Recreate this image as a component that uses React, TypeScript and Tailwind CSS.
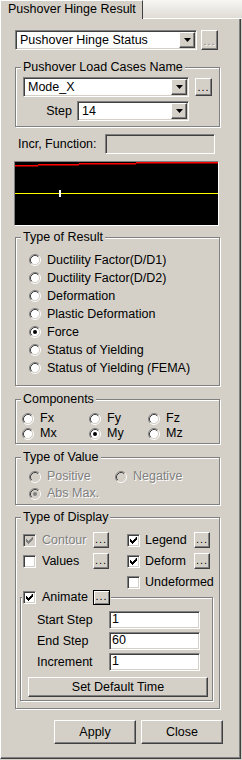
import type { ReactNode } from 'react';

const face = 'bg-[#d4d0c8]';
const raised =
    'border border-t-white border-l-white border-r-[#404040] border-b-[#404040] shadow-[inset_-1px_-1px_0_#808080] bg-[#d4d0c8]';
const sunken =
    'border border-t-[#808080] border-l-[#808080] border-r-white border-b-white shadow-[inset_1px_1px_0_#404040,inset_-1px_-1px_0_#d4d0c8]';
const etched = 'border border-[#808080] shadow-[inset_1px_1px_0_#fff,1px_1px_0_#fff]';
const grayText = 'text-[#808080] [text-shadow:1px_1px_0_#fff]';

function Arrow() {
    return (
        <div className={`${raised} w-[16px] h-[16px] flex items-center justify-center shrink-0`}>
            <svg width="7" height="4" viewBox="0 0 7 4">
                <path d="M0 0H7L3.5 4Z" fill="#000" />
            </svg>
        </div>
    );
}

function Combo({ value, className }: { value: string; className: string }) {
    return (
        <div className={`${sunken} ${className} h-[20px] bg-white flex items-center p-[1px]`}>
            <span className="flex-1 pl-[3px] leading-[16px]">{value}</span>
            <Arrow />
        </div>
    );
}

function Dots({ className, dim, focus }: { className: string; dim?: boolean; focus?: boolean }) {
    return (
        <div
            className={`${focus ? 'border border-black shadow-[inset_1px_1px_0_#fff,inset_-1px_-1px_0_#808080] bg-[#d4d0c8]' : raised} ${className} flex items-end justify-center pb-[2px] shrink-0 leading-none`}
        >
            <span className={`text-[11px] tracking-[1px] ${dim ? grayText : ''}`}>...</span>
        </div>
    );
}

function Radio({ checked, disabled }: { checked?: boolean; disabled?: boolean }) {
    return (
        <svg width="12" height="12" viewBox="0 0 12 12" className="shrink-0">
            <path d="M2.11 9.89A5.5 5.5 0 0 1 9.89 2.11" stroke="#808080" fill="none" />
            <path d="M9.89 2.11A5.5 5.5 0 0 1 2.11 9.89" stroke="#fff" fill="none" />
            <circle cx="6" cy="6" r="4.5" fill={disabled ? '#d4d0c8' : '#fff'} />
            <path d="M2.82 9.18A4.5 4.5 0 0 1 9.18 2.82" stroke="#404040" fill="none" />
            <path d="M9.18 2.82A4.5 4.5 0 0 1 2.82 9.18" stroke="#d4d0c8" fill="none" />
            {checked && <circle cx="6" cy="6" r="2" fill={disabled ? '#808080' : '#000'} />}
        </svg>
    );
}

function Check({ checked, disabled }: { checked?: boolean; disabled?: boolean }) {
    return (
        <div className={`${sunken} w-[13px] h-[13px] shrink-0 flex items-center justify-center ${disabled ? face : 'bg-white'}`}>
            {checked && (
                <svg width="7" height="7" viewBox="0 0 7 7">
                    <path
                        d="M6 0h1v3h-1v1h-1v1h-1v1h-1v1h-1v-1h-1v-1h-1v-3h1v1h1v1h1v-1h1v-1h1z"
                        fill={disabled ? '#808080' : '#000'}
                    />
                </svg>
            )}
        </div>
    );
}

function Group({ title, className, children }: { title: ReactNode; className: string; children: ReactNode }) {
    return (
        <fieldset className={`${etched} ${className}`}>
            <legend className="ml-[5px] px-[2px] leading-[14px] bg-[#d4d0c8]">{title}</legend>
            {children}
        </fieldset>
    );
}

function Field({ label, value }: { label: string; value: string }) {
    return (
        <div className="flex items-center h-[18px]">
            <span className="w-[72px]">{label}</span>
            <div className={`${sunken} w-[91px] h-[18px] bg-white pl-[2px] leading-[15px]`}>{value}</div>
        </div>
    );
}

export default function App() {
    const results = [
        'Ductility Factor(D/D1)',
        'Ductility Factor(D/D2)',
        'Deformation',
        'Plastic Deformation',
        'Force',
        'Status of Yielding',
        'Status of Yielding (FEMA)',
    ];

    return (
        <div
            className="w-[242px] h-[760px] bg-[#d4d0c8] overflow-hidden text-black text-[12.5px]"
            style={{ fontFamily: '"Liberation Sans", Arial, sans-serif' }}
        >
            {/* Tab strip */}
            <div className="flex h-[19px]">
                <div className="w-[143px] h-[19px] border-t border-l border-white border-r border-r-[#404040] pl-[7px] leading-[16px] bg-[#d4d0c8]">
                    Pushover Hinge Result
                </div>
                <div className="flex-1 bg-gradient-to-b from-[#f7f6f3] to-[#dfdcd5] border-b border-white" />
            </div>

            <div className="w-[241px] h-[740px] border-l border-white border-r border-r-[#404040] border-b border-b-[#404040] shadow-[inset_-1px_-1px_0_#808080] pl-[14px]">
                {/* Status combo */}
                <div className="flex items-center gap-[4px] pt-[11px]">
                    <Combo value="Pushover Hinge Status" className="w-[182px]" />
                    <Dots className="w-[17px] h-[20px]" dim />
                </div>

                {/* Load cases */}
                <Group title="Pushover Load Cases Name" className="w-[205px] mt-[10px] pb-[5px]">
                    <div className="flex items-center gap-[6px] pl-[7px] pt-[3px]">
                        <Combo value="Mode_X" className="w-[166px]" />
                        <Dots className="w-[17px] h-[18px]" />
                    </div>
                    <div className="flex items-center gap-[5px] pl-[7px] pt-[4px]">
                        <span className="w-[49px] text-right">Step</span>
                        <Combo value="14" className="w-[112px]" />
                    </div>
                </Group>

                {/* Incr function */}
                <div className="flex items-center mt-[7px] pl-[3px]">
                    <span className="w-[87px]">Incr, Function:</span>
                    <div className={`${sunken} w-[110px] h-[20px]`} />
                </div>

                {/* Chart */}
                <div className="mt-[7px] -ml-[1px] w-[205px] h-[65px] border border-t-[#808080] border-l-[#808080] border-r-white border-b-white bg-black">
                    <svg width="203" height="63" viewBox="0 0 203 63" className="block">
                        <rect x="0" y="3" width="23" height="1.5" fill="#ff0000" />
                        <rect x="23" y="2" width="41" height="1.5" fill="#ff0000" />
                        <rect x="64" y="1" width="57" height="1.5" fill="#ff0000" />
                        <rect x="121" y="0" width="82" height="1.5" fill="#ff0000" />
                        <rect x="0" y="31" width="203" height="1" fill="#ffff00" />
                        <rect x="44" y="28" width="2" height="7" fill="#ffffff" />
                    </svg>
                </div>

                {/* Type of result */}
                <Group title="Type of Result" className="w-[205px] mt-[4px] pt-[7px] pb-[8px]">
                    {results.map((r) => (
                        <div key={r} className="flex items-center gap-[6px] h-[18px] pl-[13px]">
                            <Radio checked={r === 'Force'} />
                            <span>{r}</span>
                        </div>
                    ))}
                </Group>

                {/* Components */}
                <Group title="Components" className="w-[205px] mt-[6px] pt-[5px] pb-[2px]">
                    <div className="grid grid-cols-[67px_59px_1fr] pl-[6px]">
                        {['Fx', 'Fy', 'Fz', 'Mx', 'My', 'Mz'].map((c) => (
                            <div key={c} className="flex items-center gap-[6px] h-[15px]">
                                <Radio checked={c === 'My'} />
                                <span>{c}</span>
                            </div>
                        ))}
                    </div>
                </Group>

                {/* Type of value */}
                <Group title="Type of Value" className="w-[205px] mt-[6px] pt-[4px] pb-[2px]">
                    <div className={`grid grid-cols-[86px_1fr] pl-[13px] ${grayText}`}>
                        <div className="flex items-center gap-[6px] h-[17px]">
                            <Radio disabled />
                            <span>Positive</span>
                        </div>
                        <div className="flex items-center gap-[6px] h-[17px]">
                            <Radio disabled />
                            <span>Negative</span>
                        </div>
                        <div className="flex items-center gap-[6px] h-[17px]">
                            <Radio checked disabled />
                            <span>Abs Max.</span>
                        </div>
                    </div>
                </Group>

                {/* Type of display */}
                <Group title="Type of Display" className="w-[205px] mt-[5px] pt-[8px] pb-[7px]">
                    <div className="grid grid-cols-[104px_1fr] gap-y-[5px] pl-[7px]">
                        <div className="flex items-center h-[16px]">
                            <Check checked disabled />
                            <span className={`ml-[6px] w-[51px] ${grayText}`}>Contour</span>
                            <Dots className="w-[16px] h-[16px]" />
                        </div>
                        <div className="flex items-center h-[16px]">
                            <Check checked />
                            <span className="ml-[5px] w-[49px]">Legend</span>
                            <Dots className="w-[16px] h-[16px]" />
                        </div>
                        <div className="flex items-center h-[16px]">
                            <Check />
                            <span className="ml-[6px] w-[51px]">Values</span>
                            <Dots className="w-[16px] h-[16px]" />
                        </div>
                        <div className="flex items-center h-[16px]">
                            <Check checked />
                            <span className="ml-[5px] w-[49px]">Deform</span>
                            <Dots className="w-[16px] h-[16px]" />
                        </div>
                        <div />
                        <div className="flex items-center h-[16px]">
                            <Check />
                            <span className="ml-[5px]">Undeformed</span>
                        </div>
                    </div>

                    <fieldset className={`${etched} ml-[4px] mt-[-1px] w-[193px] pb-[3px]`}>
                        <legend className="ml-[1px] px-[1px] bg-[#d4d0c8]">
                            <div className="flex items-center h-[16px]">
                                <Check checked />
                                <span className="ml-[6px] w-[51px]">Animate</span>
                                <Dots className="w-[17px] h-[15px]" focus />
                            </div>
                        </legend>
                        <div className="flex flex-col gap-[3px] pl-[16px] pt-[6px]">
                            <Field label="Start Step" value="1" />
                            <Field label="End Step" value="60" />
                            <Field label="Increment" value="1" />
                        </div>
                        <div className={`${raised} ml-[7px] mt-[6px] w-[180px] h-[20px] flex items-center justify-center`}>
                            Set Default Time
                        </div>
                    </fieldset>
                </Group>

                {/* Footer */}
                <div className="flex gap-[5px] mt-[11px] pl-[39px]">
                    <div className={`${raised} w-[82px] h-[24px] flex items-center justify-center`}>Apply</div>
                    <div className={`${raised} w-[82px] h-[24px] flex items-center justify-center`}>Close</div>
                </div>
            </div>
        </div>
    );
}
